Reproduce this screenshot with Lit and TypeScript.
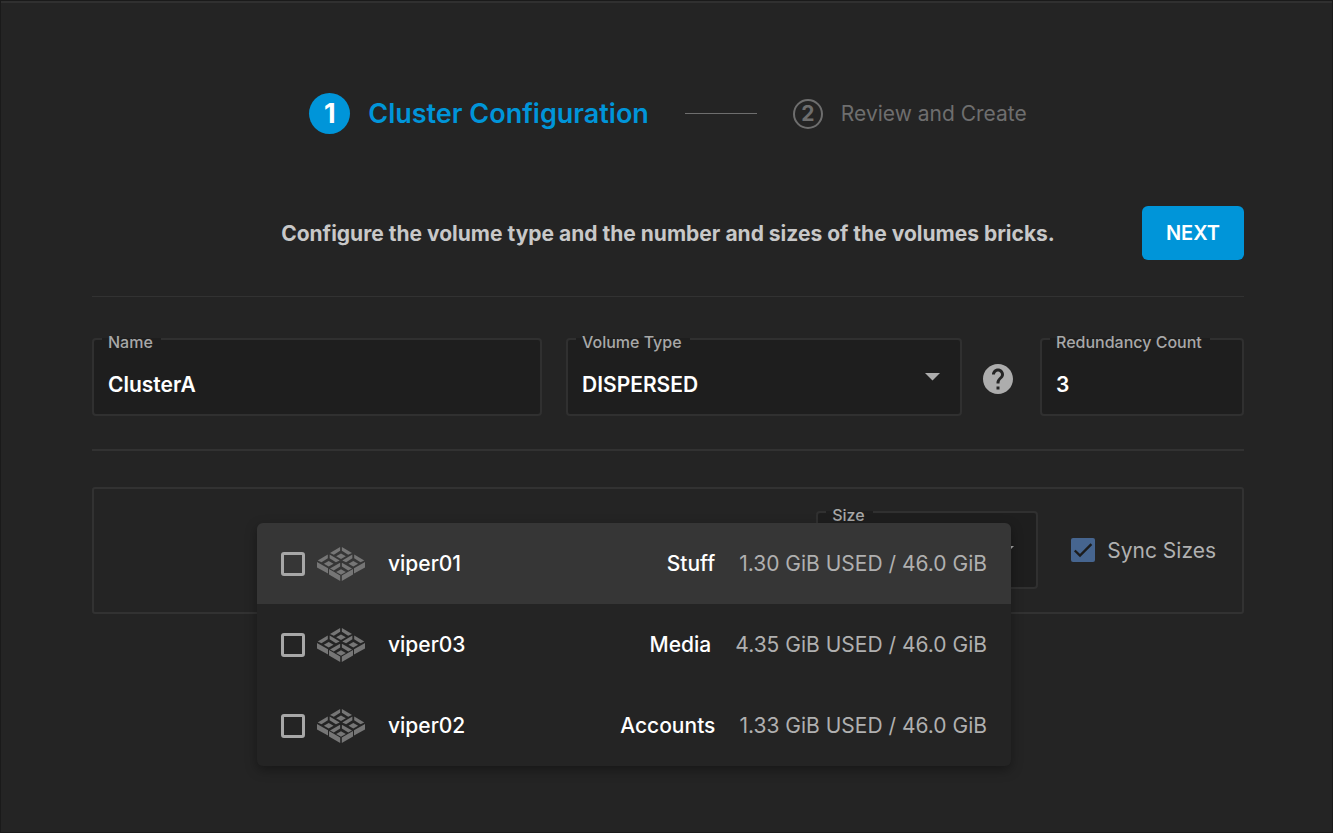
import { LitElement, html, svg, css } from "lit";
import { customElement, property, state } from "lit/decorators.js";

const FONT = css`Inter, "Open Sans", sans-serif`;

interface Node {
  id: string;
  pool: string;
  usage: string;
}

@customElement("brick-icon")
export class BrickIcon extends LitElement {
  static styles = css`
    :host {
      display: block;
      width: 48px;
      height: 34px;
    }
    svg {
      display: block;
      fill: #767676;
    }
  `;

  private tray(x: number, y: number) {
    return svg`<g transform="translate(${x} ${y})">
      <path d="M-11 -3.4L-.9 -9.3V-5.6L-7.2 -1.6Z" />
      <path d="M11 -3.4L.9 -9.3V-5.6L7.2 -1.6Z" />
      <path d="M-4.8 0L0 -2.7L4.8 0L0 2.7Z" />
    </g>`;
  }

  render() {
    return html`<svg width="48" height="34" viewBox="0 0 48 34" aria-hidden="true">
      ${this.tray(24, 9.3)} ${this.tray(11.7, 16.8)} ${this.tray(36.3, 16.8)} ${this.tray(24, 25)}
      <path d="M0 15L11 21.2V26.6L0 20.4Z" />
      <path d="M12 22L23.2 28.4V34L12 27.6Z" />
      <path d="M48 15L37 21.2V26.6L48 20.4Z" />
      <path d="M36 22L24.8 28.4V34L36 27.6Z" />
    </svg>`;
  }
}

@customElement("node-menu")
export class NodeMenu extends LitElement {
  static styles = css`
    :host {
      display: block;
      background: #242424;
      border-radius: 6px;
      overflow: hidden;
      box-shadow: 0 4px 12px rgba(0, 0, 0, 0.35);
      font-family: ${FONT};
    }
    .row {
      display: flex;
      align-items: center;
      height: 81px;
      padding: 0 24px;
      font-size: 21px;
      cursor: pointer;
    }
    .row.active {
      background: #363636;
    }
    .box {
      appearance: none;
      box-sizing: border-box;
      width: 24px;
      height: 24px;
      margin: 0 12px 0 0;
      border: 3px solid #a7a7a7;
      border-radius: 3px;
    }
    .box:checked {
      background: #46658f;
      border-color: #46658f;
    }
    .name {
      flex: 1;
      margin-left: 23px;
      color: #fff;
      font-weight: 500;
    }
    .pool {
      color: #fff;
      font-weight: 500;
    }
    .usage {
      margin-left: 24px;
      color: #b0b0b0;
    }
  `;

  @property({ attribute: false }) nodes: Node[] = [];
  @state() private active = 0;

  render() {
    return this.nodes.map(
      (n, i) => html`<label
        class="row ${i === this.active ? "active" : ""}"
        @mouseenter=${() => (this.active = i)}
      >
        <input class="box" type="checkbox" name=${n.id} />
        <brick-icon></brick-icon>
        <span class="name">${n.id}</span>
        <span class="pool">${n.pool}</span>
        <span class="usage">${n.usage}</span>
      </label>`
    );
  }
}

@customElement("app-root")
export class AppRoot extends LitElement {
  static styles = css`
    :host {
      display: block;
      box-sizing: border-box;
      min-height: 100vh;
      background: #242424;
      border: 1px solid #1a1a1a;
      color: #c8c8c8;
      font-family: ${FONT};
    }
    * {
      box-sizing: border-box;
    }
    main {
      border-top: 2px solid #303030;
      padding: 90px 88px 40px 91px;
    }
    .steps {
      display: flex;
      align-items: center;
      justify-content: center;
      height: 41px;
      margin: 0;
      padding: 0;
      list-style: none;
    }
    .step {
      display: flex;
      align-items: center;
      gap: 18px;
      font-size: 21px;
      color: #6e6e6e;
    }
    .step.current {
      font-size: 27px;
      font-weight: 600;
      color: #0095d9;
    }
    .num {
      display: grid;
      place-items: center;
      width: 30px;
      height: 30px;
      border: 2px solid #6e6e6e;
      border-radius: 50%;
      font-weight: 700;
    }
    .current .num {
      width: 41px;
      height: 41px;
      border: 0;
      background: #0095d9;
      color: #fff;
    }
    .rule {
      width: 72px;
      height: 1px;
      margin: 0 36px;
      background: #6e6e6e;
    }
    .intro {
      display: grid;
      grid-template-columns: 1fr auto 1fr;
      align-items: center;
      margin-top: 72px;
      padding-bottom: 36px;
      border-bottom: 1px solid #323232;
    }
    .lead {
      grid-column: 2;
      margin: 0;
      font-size: 21px;
      font-weight: 700;
    }
    .next {
      justify-self: end;
      height: 54px;
      padding: 0 24px;
      border: 0;
      border-radius: 6px;
      background: #0095d9;
      color: #fff;
      font: 600 20px ${FONT};
    }
    .fields {
      display: grid;
      grid-template-columns: 450fr 450fr 204fr;
      gap: 24px;
      padding: 41px 0 33px;
      border-bottom: 2px solid #323232;
    }
    .typed {
      display: flex;
      align-items: center;
      gap: 21px;
      padding-right: 3px;
    }
    .typed .field {
      flex: 1;
    }
    .field {
      position: relative;
      height: 78px;
      background: #1e1e1e;
      border: 2px solid #303030;
      border-radius: 4px;
    }
    .caption {
      position: absolute;
      top: -2px;
      left: 8px;
      height: 8px;
      padding: 0 8px 0 6px;
      background: #1e1e1e;
      color: #a8a8a8;
      font-size: 16px;
      font-weight: 500;
      line-height: 8px;
    }
    .control {
      display: block;
      appearance: none;
      width: 100%;
      height: 100%;
      margin: 0;
      padding: 14px 14px 0;
      border: 0;
      outline: 0;
      background: none;
      color: #fff;
      font: 600 21px ${FONT};
    }
    .arrow {
      position: absolute;
      right: 20px;
      top: 33px;
      fill: #adadad;
      pointer-events: none;
    }
    .help {
      display: block;
      width: 30px;
      height: 30px;
      margin-top: 4px;
      padding: 0;
      border: 0;
      background: none;
    }
    .help svg {
      display: block;
      fill: #adadad;
    }
    .card {
      position: relative;
      display: flex;
      align-items: center;
      justify-content: flex-end;
      gap: 33px;
      margin-top: 36px;
      padding: 22px 26px 23px;
      border: 2px solid #323232;
      border-radius: 3px;
    }
    .size {
      width: 222px;
    }
    .size .arrow {
      right: 22px;
    }
    .sync {
      display: flex;
      align-items: center;
      gap: 12px;
      color: #b0b0b0;
      font-size: 21px;
    }
    .tick {
      display: grid;
    }
    .tick > * {
      grid-area: 1 / 1;
    }
    .tick input {
      appearance: none;
      width: 24px;
      height: 24px;
      margin: 0;
      border: 3px solid #a7a7a7;
      border-radius: 2px;
    }
    .tick input:checked {
      border: 0;
      background: #46658f;
    }
    .tick svg {
      fill: none;
      stroke: #1c1c1c;
      stroke-width: 2.4;
      pointer-events: none;
    }
    .menu {
      position: absolute;
      top: 34px;
      left: 163px;
      right: 231px;
    }
  `;

  private nodes: Node[] = [
    { id: "viper01", pool: "Stuff", usage: "1.30 GiB USED / 46.0 GiB" },
    { id: "viper03", pool: "Media", usage: "4.35 GiB USED / 46.0 GiB" },
    { id: "viper02", pool: "Accounts", usage: "1.33 GiB USED / 46.0 GiB" },
  ];

  private arrow() {
    return html`<svg class="arrow" width="15" height="8" viewBox="0 0 15 8" aria-hidden="true">
      <path d="M0 0H15L7.5 7.5Z" />
    </svg>`;
  }

  render() {
    return html`<main>
      <ol class="steps">
        <li class="step current"><span class="num">1</span>Cluster Configuration</li>
        <li class="rule" role="presentation"></li>
        <li class="step"><span class="num">2</span>Review and Create</li>
      </ol>

      <div class="intro">
        <p class="lead">Configure the volume type and the number and sizes of the volumes bricks.</p>
        <button class="next" type="button">NEXT</button>
      </div>

      <div class="fields">
        <div class="field">
          <label class="caption" for="name">Name</label>
          <input class="control" id="name" type="text" value="ClusterA" />
        </div>
        <div class="typed">
          <div class="field">
            <label class="caption" for="type">Volume Type</label>
            <select class="control" id="type">
              <option>DISPERSED</option>
            </select>
            ${this.arrow()}
          </div>
          <button class="help" type="button" aria-label="Help">
            <svg width="30" height="30" viewBox="2 2 20 20" aria-hidden="true">
              <path
                d="M12 2C6.48 2 2 6.48 2 12s4.48 10 10 10 10-4.48 10-10S17.52 2 12 2zm1 17h-2v-2h2v2zm2.07-7.75l-.9.92C13.45 12.9 13 13.5 13 15h-2v-.5c0-1.1.45-2.1 1.17-2.83l1.24-1.26c.37-.36.59-.86.59-1.41 0-1.1-.9-2-2-2s-2 .9-2 2H8c0-2.21 1.79-4 4-4s4 1.79 4 4c0 .88-.36 1.68-.93 2.25z"
              />
            </svg>
          </button>
        </div>
        <div class="field">
          <label class="caption" for="redundancy">Redundancy Count</label>
          <input class="control" id="redundancy" type="text" inputmode="numeric" value="3" />
        </div>
      </div>

      <section class="card">
        <div class="field size">
          <label class="caption" for="size">Size</label>
          <select class="control" id="size"></select>
          ${this.arrow()}
        </div>
        <label class="sync">
          <span class="tick">
            <input type="checkbox" checked />
            <svg width="24" height="24" viewBox="0 0 24 24" aria-hidden="true">
              <path d="M3.8 12.5L9 17.6L20.4 6.2" />
            </svg>
          </span>
          Sync Sizes
        </label>
        <node-menu class="menu" .nodes=${this.nodes}></node-menu>
      </section>
    </main>`;
  }
}
